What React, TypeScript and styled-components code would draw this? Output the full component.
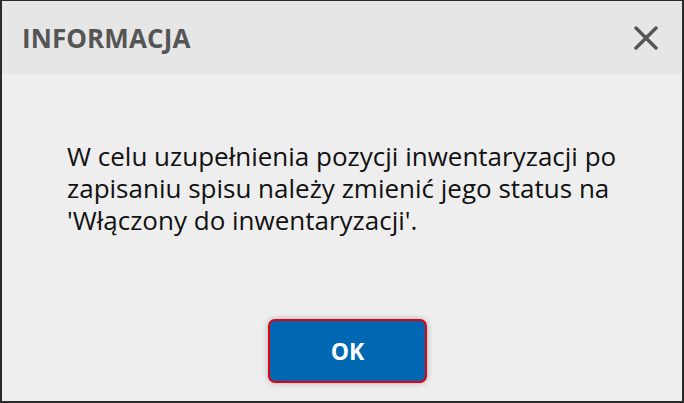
import React from "react";
import styled, { createGlobalStyle } from "styled-components";

const Global = createGlobalStyle`
  html, body { margin: 0; padding: 0; background: #ffffff; }
  * { box-sizing: border-box; }
`;

const Dialog = styled.div`
  width: 684px;
  height: 403px;
  display: flex;
  flex-direction: column;
  background: #eeeeee;
  border-top: 1px solid #2b2b2b;
  border-left: 2px solid #2b2b2b;
  border-right: 2px solid #2b2b2b;
  border-bottom: 2px solid #2b2b2b;
  font-family: "Open Sans", "Noto Sans", sans-serif;
`;

const Header = styled.div`
  height: 73px;
  flex: none;
  display: flex;
  align-items: center;
  justify-content: space-between;
  padding: 0 22px 0 20px;
  background: #e6e6e6;
`;

const Title = styled.h1`
  margin: 0;
  font-size: 26px;
  font-weight: 700;
  color: #555555;
  letter-spacing: 0.1px;
`;

const CloseButton = styled.button`
  border: none;
  background: transparent;
  padding: 0;
  width: 28px;
  height: 28px;
  display: flex;
  align-items: center;
  justify-content: center;
  cursor: pointer;
`;

const Body = styled.div`
  flex: 1;
  display: flex;
  flex-direction: column;
  align-items: center;
  padding: 66px 54px 0 65px;
`;

const Message = styled.p`
  margin: 0;
  width: 100%;
  font-size: 26px;
  line-height: 32px;
  color: #111111;
  white-space: nowrap;
`;

const OkButton = styled.button`
  margin-top: 83px;
  width: 159px;
  height: 64px;
  border: 2px solid #e3000f;
  border-radius: 7px;
  background: #0068b3;
  color: #ffffff;
  font-family: "Open Sans", "Noto Sans", sans-serif;
  font-size: 23px;
  font-weight: 700;
  box-shadow: 0 0 6px rgba(0, 0, 0, 0.25);
  cursor: pointer;
`;

export default function App() {
  return (
    <>
      <Global />
      <Dialog>
        <Header>
          <Title>INFORMACJA</Title>
          <CloseButton aria-label="Zamknij">
            <svg width="24" height="24" viewBox="0 0 24 24">
              <path
                d="M2 2 L22 22 M22 2 L2 22"
                stroke="#555555"
                strokeWidth="3.4"
                strokeLinecap="round"
              />
            </svg>
          </CloseButton>
        </Header>
        <Body>
          <Message>
            W celu uzupełnienia pozycji inwentaryzacji po
            <br />
            zapisaniu spisu należy zmienić jego status na
            <br />
            'Włączony do inwentaryzacji'.
          </Message>
          <OkButton>OK</OkButton>
        </Body>
      </Dialog>
    </>
  );
}
